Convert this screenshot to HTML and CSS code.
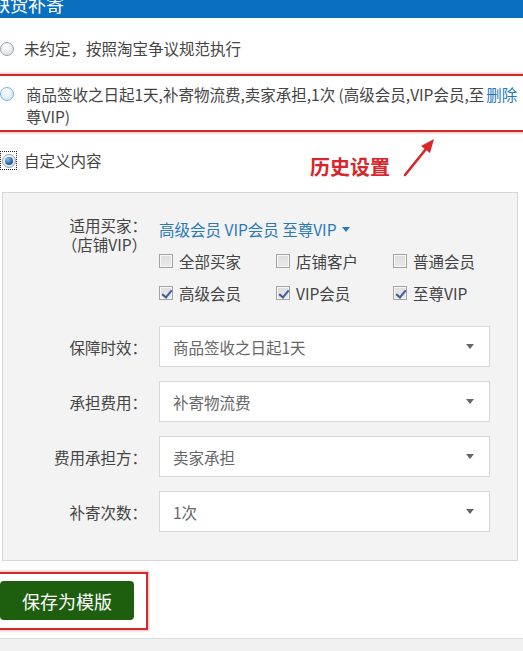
FILE: index.html
```html
<!DOCTYPE html>
<html lang="zh-CN">
<head>
<meta charset="utf-8">
<title>补寄设置</title>
<link rel="stylesheet" href="styles.css">
</head>
<body>
<div class="header"><span class="title">缺货补寄</span></div>

<div class="opt opt1"><span class="radio"></span><span class="otext">未约定，按照淘宝争议规范执行</span></div>

<div class="hist">
  <div class="opt2">
    <span class="radio radio-hover"></span>
    <span class="otext2">商品签收之日起1天,补寄物流费,卖家承担,1次 (高级会员,VIP会员,至<br>尊VIP)</span>
    <a class="del">删除</a>
  </div>
</div>

<div class="opt opt3">
  <span class="focus"><span class="radio checked"></span></span>
  <span class="otext">自定义内容</span>
  <span class="note">历史设置</span>
  <svg class="arrow" width="40" height="42" viewBox="0 0 40 42">
    <line x1="5" y1="38" x2="26" y2="12" stroke="#d9262b" stroke-width="2.6" stroke-linecap="round"/>
    <polygon points="34,2 30,16 21,9" fill="#d9262b"/>
  </svg>
</div>

<div class="panel">
  <div class="frow buyer">
    <div class="flabel lbl2"><div>适用买家：</div><div>（店铺VIP）</div></div>
    <div class="fctrl">
      <div class="levels">高级会员 VIP会员 至尊VIP<span class="bcaret"></span></div>
      <div class="checks">
        <label class="ck"><span class="box"></span>全部买家</label>
        <label class="ck"><span class="box"></span>店铺客户</label>
        <label class="ck"><span class="box"></span>普通会员</label>
        <label class="ck"><span class="box on"></span>高级会员</label>
        <label class="ck"><span class="box on"></span>VIP会员</label>
        <label class="ck"><span class="box on"></span>至尊VIP</label>
      </div>
    </div>
  </div>
  <div class="frow sel-row first">
    <div class="flabel">保障时效：</div>
    <div class="select"><span>商品签收之日起1天</span><span class="caret"></span></div>
  </div>
  <div class="frow sel-row">
    <div class="flabel">承担费用：</div>
    <div class="select"><span>补寄物流费</span><span class="caret"></span></div>
  </div>
  <div class="frow sel-row">
    <div class="flabel">费用承担方：</div>
    <div class="select"><span>卖家承担</span><span class="caret"></span></div>
  </div>
  <div class="frow sel-row">
    <div class="flabel">补寄次数：</div>
    <div class="select"><span>1次</span><span class="caret"></span></div>
  </div>
</div>

<div class="save-box"><button class="save">保存为模版</button></div>
<div class="footer"></div>
</body>
</html>
```
FILE: styles.css
```css
* { box-sizing: border-box; }
html, body { margin: 0; padding: 0; }
body {
  width: 523px;
  height: 651px;
  overflow: hidden;
  background: #fff;
  font-family: "Noto Sans CJK SC", "Microsoft YaHei", sans-serif;
  font-size: 15.5px;
  color: #444;
}

.header {
  height: 18px;
  background: #0b6fc0;
  overflow: hidden;
}
.title {
  display: block;
  color: #fff;
  font-size: 18px;
  line-height: 18px;
  margin: -5px 0 0 -8px;
  white-space: nowrap;
}

.opt {
  display: flex;
  align-items: center;
  height: 21px;
  line-height: 21px;
  white-space: nowrap;
}
.opt1 { margin-top: 20px; }

.radio {
  flex: none;
  display: inline-block;
  width: 14px;
  height: 14px;
  border-radius: 50%;
  border: 1px solid #9aa3ad;
  background: radial-gradient(circle at 40% 35%, #ffffff 0%, #eeeeee 45%, #cfd3d7 100%);
  margin-right: 10px;
  position: relative;
}
.radio-hover {
  border-color: #7fb1de;
  background: radial-gradient(circle at 40% 35%, #ffffff 0%, #e4f1fb 50%, #b9d8f0 100%);
}
.radio.checked::after {
  content: "";
  position: absolute;
  left: 2px;
  top: 2px;
  width: 8px;
  height: 8px;
  border-radius: 50%;
  background: radial-gradient(circle at 35% 30%, #8fc3ee 0%, #2b6aa9 55%, #173f6e 100%);
}

.hist {
  margin: 15px -10px 0 -4px;
  border: 2px solid #d22b2b;
  box-shadow: 0 0 2px 1px rgba(225, 90, 90, 0.45);
  padding: 7px 0 3px 2px;
}
.opt2 {
  display: flex;
  align-items: flex-start;
  line-height: 22px;
  white-space: nowrap;
}
.opt2 .radio { margin-top: 4px; margin-right: 12px; }
.del {
  color: #1f78bd;
  margin-left: 2px;
}

.opt3 {
  margin-top: 18px;
  position: relative;
}
.focus {
  display: inline-flex;
  align-items: center;
  justify-content: center;
  width: 17px;
  height: 19px;
  border: 1px dotted #222;
  margin-right: 7px;
}
.focus .radio { margin-right: 0; }
.note {
  position: absolute;
  left: 310px;
  top: 5px;
  font-size: 20px;
  line-height: 24px;
  font-weight: bold;
  color: #d8262b;
}
.arrow {
  position: absolute;
  left: 400px;
  top: -13px;
}

.panel {
  margin: 21px 5px 0 2px;
  border: 1px solid #d6d6d6;
  background: #f3f3f3;
  padding: 24px 0 28px 0;
}
.frow {
  display: grid;
  grid-template-columns: 144px 331px;
  column-gap: 12px;
}
.flabel {
  text-align: right;
  color: #444;
  white-space: nowrap;
}
.lbl2 {
  line-height: 19px;
  margin-top: -1px;
  display: flex;
  flex-direction: column;
  align-items: flex-end;
}
.levels {
  margin-top: 2px;
  line-height: 20px;
  color: #2a7ab8;
  display: flex;
  align-items: center;
}
.bcaret {
  display: inline-block;
  margin-left: 6px;
  border-left: 4.5px solid transparent;
  border-right: 4.5px solid transparent;
  border-top: 5px solid #2a7ab8;
}
.checks {
  margin-top: 6px;
  display: grid;
  grid-template-columns: 117px 117px 97px;
  grid-auto-rows: 32px;
}
.ck {
  display: flex;
  align-items: center;
  white-space: nowrap;
  color: #444;
}
.box {
  flex: none;
  width: 14px;
  height: 14px;
  border: 1px solid #a3a3a3;
  box-shadow: inset 0 0 0 1px #f7f7f7;
  background: linear-gradient(#dedede, #eaeaea);
  margin-right: 6px;
  position: relative;
}
.box.on::after {
  content: "";
  position: absolute;
  left: 4px;
  top: 1px;
  width: 4px;
  height: 8px;
  border-right: 2px solid #3b5d9c;
  border-bottom: 2px solid #3b5d9c;
  transform: rotate(40deg);
}

.sel-row { margin-top: 14px; align-items: center; }
.sel-row.first { margin-top: 17px; }
.select {
  height: 41px;
  border: 1px solid #d8d8d8;
  background: #fff;
  display: flex;
  align-items: center;
  justify-content: space-between;
  padding: 0 15px 0 13px;
  color: #666;
}
.caret {
  display: inline-block;
  border-left: 4.5px solid transparent;
  border-right: 4.5px solid transparent;
  border-top: 5px solid #666;
}

.save-box {
  margin: 11px 0 0 -4px;
  width: 152px;
  border: 2px solid #d22b2b;
  box-shadow: 0 0 2px 1px rgba(225, 90, 90, 0.45);
  padding: 7px 12px 8px 2px;
}
.save {
  display: block;
  width: 134px;
  height: 39px;
  border: none;
  border-radius: 4px;
  background: #1d5e0f;
  color: #fff;
  font-family: "Noto Sans CJK SC", "Microsoft YaHei", sans-serif;
  font-size: 18px;
  padding: 0;
}
.footer {
  margin-top: 8px;
  border-top: 1px solid #dcdcdc;
  background: #f1f1f1;
  height: 20px;
}
```
